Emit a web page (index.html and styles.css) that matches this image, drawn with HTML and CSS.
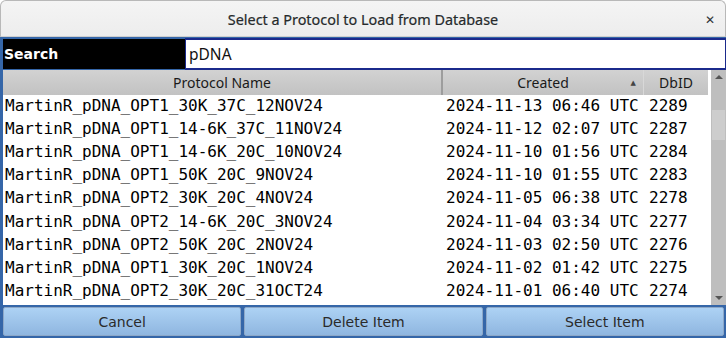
FILE: index.html
```html
<!DOCTYPE html>
<html lang="en">
<head>
  <meta charset="UTF-8">
  <title>Select a Protocol to Load from Database</title>
  <link rel="stylesheet" href="styles.css">
</head>
<body>
  <div class="window">
    <div class="titlebar">
      <span class="title">Select a Protocol to Load from Database</span>
      <span class="close">&#x2715;</span>
    </div>
    <div class="frame">
      <div class="search-row">
        <div class="search-label">Search</div>
        <input class="search-input" type="text" value="pDNA">
      </div>
      <div class="table">
        <div class="table-main">
          <div class="header">
            <div class="col name">Protocol Name</div>
            <div class="col created">Created<span class="sort">&#x25B2;</span></div>
            <div class="col dbid">DbID</div>
          </div>
          <div class="rows" id="rows"></div>
        </div>
        <div class="scrollbar">
          <div class="arrow up"></div>
          <div class="track"><div class="thumb"></div></div>
          <div class="arrow down"></div>
        </div>
      </div>
      <div class="buttons">
        <button class="button">Cancel</button>
        <button class="button">Delete Item</button>
        <button class="button">Select Item</button>
      </div>
    </div>
  </div>

  <script>
    const protocols = [
      ['MartinR_pDNA_OPT1_30K_37C_12NOV24', '2024-11-13 06:46 UTC', 2289],
      ['MartinR_pDNA_OPT1_14-6K_37C_11NOV24', '2024-11-12 02:07 UTC', 2287],
      ['MartinR_pDNA_OPT1_14-6K_20C_10NOV24', '2024-11-10 01:56 UTC', 2284],
      ['MartinR_pDNA_OPT1_50K_20C_9NOV24', '2024-11-10 01:55 UTC', 2283],
      ['MartinR_pDNA_OPT2_30K_20C_4NOV24', '2024-11-05 06:38 UTC', 2278],
      ['MartinR_pDNA_OPT2_14-6K_20C_3NOV24', '2024-11-04 03:34 UTC', 2277],
      ['MartinR_pDNA_OPT2_50K_20C_2NOV24', '2024-11-03 02:50 UTC', 2276],
      ['MartinR_pDNA_OPT1_30K_20C_1NOV24', '2024-11-02 01:42 UTC', 2275],
      ['MartinR_pDNA_OPT2_30K_20C_31OCT24', '2024-11-01 06:40 UTC', 2274]
    ];

    const rows = document.getElementById('rows');
    protocols.forEach(p => {
      const row = document.createElement('div');
      row.className = 'row';
      row.innerHTML =
        '<div class="cell name">' + p[0] + '</div>' +
        '<div class="cell created">' + p[1] + '</div>' +
        '<div class="cell dbid">' + p[2] + '</div>';
      rows.appendChild(row);
    });
  </script>
</body>
</html>
```

FILE: styles.css
```css
body {
  margin: 0;
  background-color: #fff;
  font-family: 'Noto Sans', 'DejaVu Sans', sans-serif;
}

.window {
  width: 726px;
  height: 338px;
  display: flex;
  flex-direction: column;
  overflow: hidden;
}

.titlebar {
  flex: none;
  position: relative;
  display: flex;
  justify-content: center;
  align-items: center;
  background: linear-gradient(#f4f4f4, #ededed);
  border: 1px solid #b8b8b8;
  border-bottom: 1px solid #cfcfcf;
  border-radius: 6px 6px 0 0;
  box-sizing: border-box;
  height: 37px;
}

.title {
  font-size: 14.4px;
  color: #262a2b;
  margin-top: 1px;
  -webkit-text-stroke: 0.2px #262a2b;
}

.close {
  position: absolute;
  right: 10px;
  top: 10px;
  font-size: 12px;
  font-weight: bold;
  color: #2e3436;
}

.frame {
  flex: 1;
  display: flex;
  flex-direction: column;
  background-color: #3566a8;
  padding: 1px 0 0 3px;
}

.search-row {
  display: flex;
  height: 32px;
  flex: none;
}

.search-label {
  width: 181px;
  background-color: #000;
  color: #fff;
  font-family: 'DejaVu Sans', sans-serif;
  font-weight: bold;
  font-size: 14px;
  display: flex;
  align-items: center;
  padding-left: 1px;
  margin: 1px 0;
}

.search-input {
  flex: 1;
  margin: 0;
  padding: 0 0 0 3px;
  border: 1px solid #1b2a8c;
  border-width: 2px 1px 2px 1px;
  background-color: #fff;
  font-family: 'Noto Sans', sans-serif;
  font-size: 15.5px;
  color: #111;
  outline: none;
}

.table {
  display: flex;
  height: 235px;
  flex: none;
  background-color: #fff;
}

.table-main {
  width: 705px;
  display: flex;
  flex-direction: column;
}

.header {
  display: flex;
  height: 25px;
  flex: none;
  background: linear-gradient(#d2d2d2, #c2c2c2);
  font-size: 14px;
  color: #1a1a1a;
}

.col {
  display: flex;
  justify-content: center;
  align-items: center;
  position: relative;
  box-sizing: border-box;
}

.col.name {
  width: 440px;
  border-right: 2px solid #9d9d9d;
}

.col.created {
  width: 201px;
  border-right: 1px solid #d8d8d8;
}

.col.dbid {
  width: 64px;
}

.sort {
  position: absolute;
  right: 7px;
  top: 8px;
  font-size: 7px;
  color: #444;
}

.rows {
  flex: 1;
  margin-top: -1px;
}

.row {
  display: flex;
  height: 23.1px;
  align-items: center;
  font-family: 'DejaVu Sans Mono', monospace;
  font-size: 16px;
  color: #000;
  white-space: nowrap;
}

.cell.name {
  width: 438px;
  padding-left: 2px;
}

.cell.created {
  width: 198px;
  padding-left: 3px;
}

.cell.dbid {
  padding-left: 5px;
}

.scrollbar {
  width: 15px;
  margin-left: 3px;
  background-color: #bebebe;
  display: flex;
  flex-direction: column;
}

.arrow {
  height: 14px;
  position: relative;
}

.arrow::after {
  content: '';
  position: absolute;
  left: 4px;
  border-left: 4px solid transparent;
  border-right: 4px solid transparent;
}

.arrow.up::after {
  top: 5px;
  border-bottom: 4px solid #555;
}

.arrow.down::after {
  top: 5px;
  border-top: 4px solid #555;
}

.track {
  flex: 1;
  padding-top: 26px;
}

.thumb {
  height: 30px;
  background-color: #cdcdcd;
  margin: 0 1px;
}

.buttons {
  flex: 1;
  display: flex;
  gap: 3px;
  padding: 2px 2px 2px 0;
}

.button {
  flex: 1;
  border: 1px solid #8da8c8;
  border-radius: 2px;
  background: linear-gradient(#add2f4, #8fb6e0);
  font-family: 'DejaVu Sans', sans-serif;
  font-size: 14px;
  color: #2a2a2a;
  padding: 0;
  cursor: pointer;
}
```
